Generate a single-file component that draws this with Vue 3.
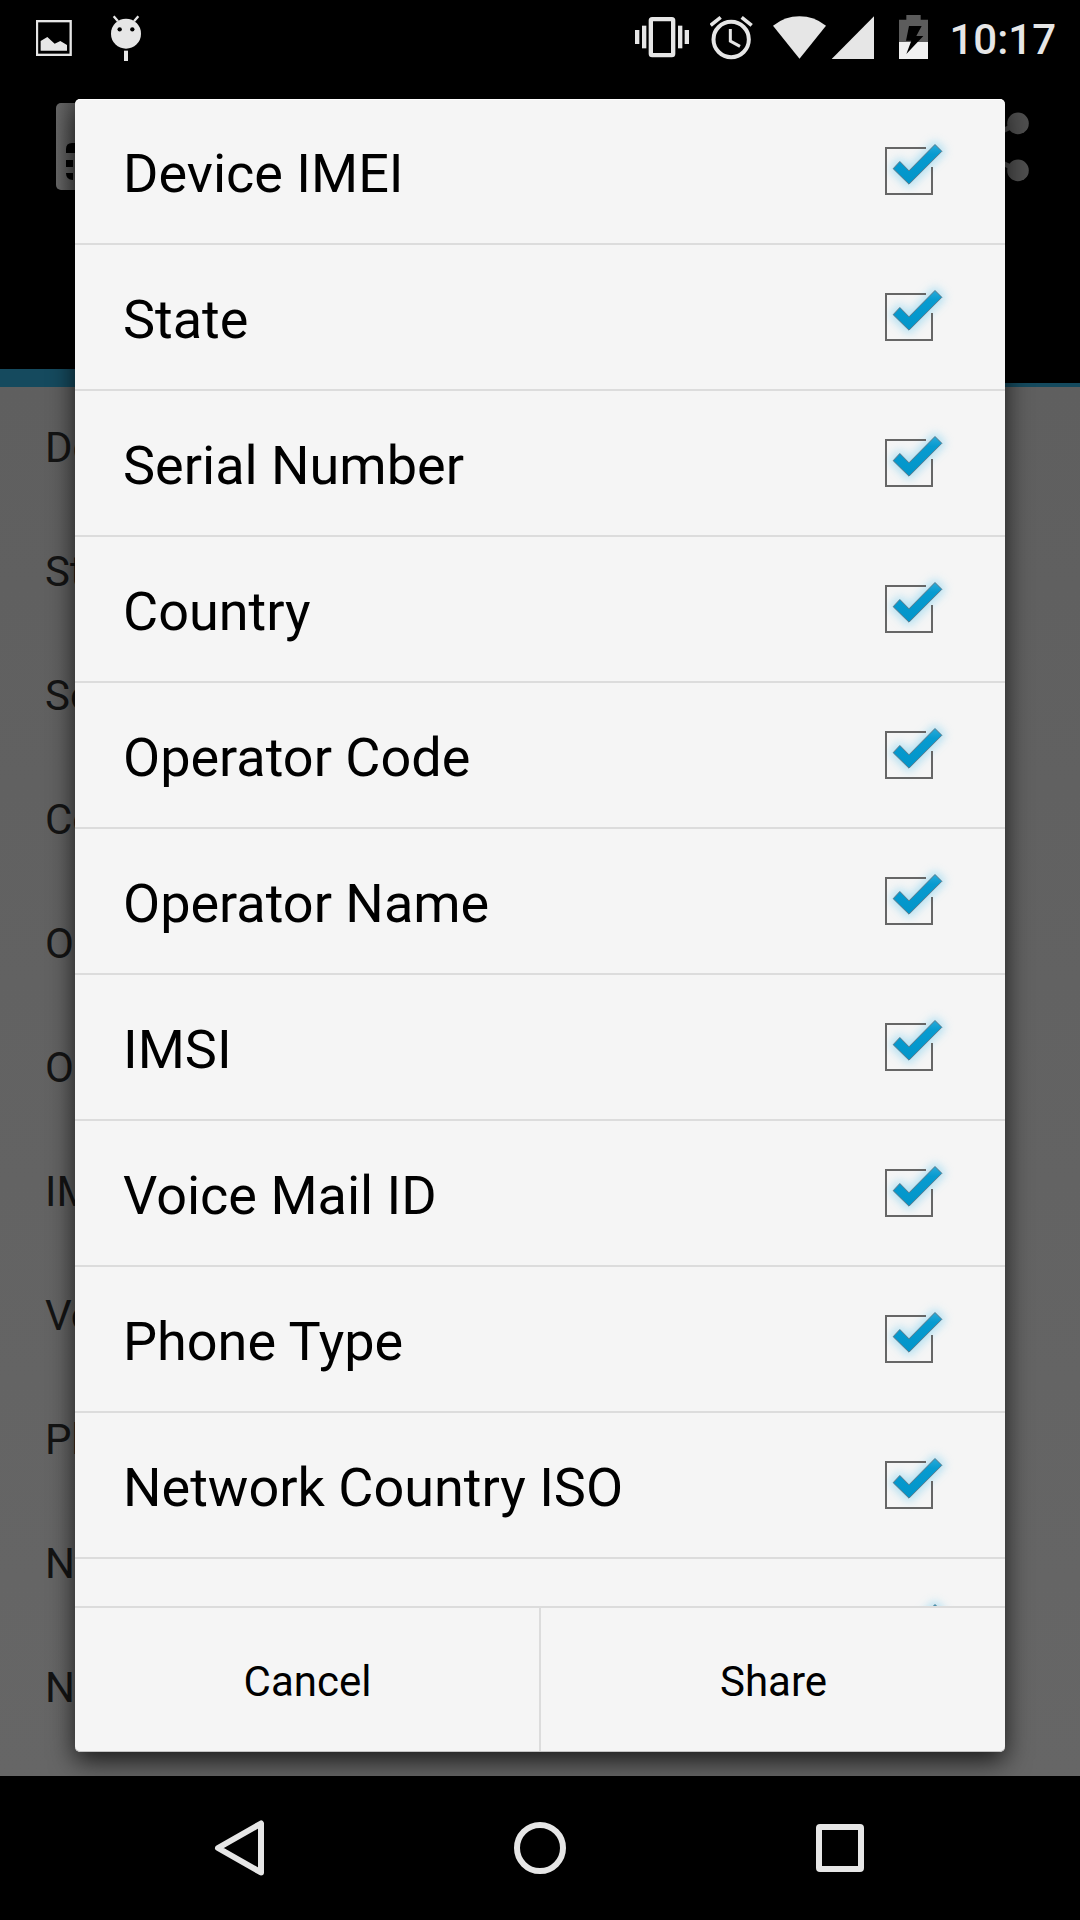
<script setup>
const fields = [
  { label: 'Device IMEI', short: 'De' },
  { label: 'State', short: 'St' },
  { label: 'Serial Number', short: 'Se' },
  { label: 'Country', short: 'Co' },
  { label: 'Operator Code', short: 'O' },
  { label: 'Operator Name', short: 'O' },
  { label: 'IMSI', short: 'IM' },
  { label: 'Voice Mail ID', short: 'Vo' },
  { label: 'Phone Type', short: 'Ph' },
  { label: 'Network Country ISO', short: 'N' },
  { label: '', short: 'N' },
]
</script>

<template>
  <div class="screen">
    <header class="status">
      <svg class="picture" viewBox="108 0 108 225">
        <rect x="111" y="63.500" width="101" height="101" fill="none" stroke="#e6e6e6" stroke-width="7" />
        <path d="M122 152V123L142 111L164 131L181 123L201 135V152Z" fill="#e6e6e6" />
      </svg>
      <svg class="droid" viewBox="333 0 90 225">
        <path d="M341 49L354 64M415 49L402 64" stroke="#e6e6e6" stroke-width="7" />
        <circle cx="378" cy="101" r="45" fill="#e6e6e6" />
        <circle cx="359" cy="88" r="6.500" fill="#000" />
        <circle cx="397" cy="88" r="6.500" fill="#000" />
        <rect x="372" y="152" width="12" height="31" fill="#e6e6e6" />
      </svg>
      <div class="spacer"></div>
      <svg class="vibrate" viewBox="45 0 162 225" fill="#e6e6e6">
        <rect x="92.500" y="57.500" width="67" height="108" rx="4" fill="none" stroke="#e6e6e6" stroke-width="13" />
        <rect x="45" y="90" width="13" height="42" />
        <rect x="66" y="77" width="13" height="68" />
        <rect x="174" y="77" width="13" height="68" />
        <rect x="194" y="90" width="13" height="42" />
      </svg>
      <svg class="alarm" viewBox="270 0 129 225" fill="none" stroke="#e6e6e6">
        <circle cx="333.500" cy="118.500" r="53" stroke-width="12" />
        <path d="M272 76L302 52M395 76L365 52" stroke-width="11" />
        <path d="M331 87V123L360 139" stroke-width="9" />
      </svg>
      <svg class="wifi" viewBox="459 0 159 225">
        <path d="M538.500 176L459 77Q495 49 538.500 49T618 77Z" fill="#e6e6e6" />
      </svg>
      <svg class="signal" viewBox="633 0 129 225">
        <path d="M762 49V177H635Z" fill="#e6e6e6" />
      </svg>
      <svg class="battery" viewBox="837 0 87 225">
        <path d="M837 126V59H859V45H902V59H924V126Z" fill="#5c5c5c" />
        <rect x="837" y="126" width="87" height="51" fill="#f0f0f0" />
        <path d="M867 78H905L889 108H910L859 162L874 122H858Z" fill="#000" />
      </svg>
      <span class="clock">10:17</span>
    </header>

    <div class="appbar">
      <svg class="sim" viewBox="0 0 87 87">
        <defs>
          <linearGradient id="simShade" x1="0" x2="1">
            <stop offset="0" stop-color="#676767" />
            <stop offset="0.3" stop-color="#545454" />
          </linearGradient>
        </defs>
        <rect width="70" height="87" rx="5" fill="url(#simShade)" />
        <path d="M10 50V46Q10 40 16 40H30V50ZM10 57H17V64H10ZM10 70H17V77Q10 77 10 70Z" fill="#000" />
      </svg>
      <svg class="share" viewBox="0 0 72 72">
        <path d="M61 12.400L12 36L61 59.400" fill="none" stroke="#4c4c4c" stroke-width="5" />
        <g fill="#4f4f4f">
          <circle cx="61" cy="12.400" r="10.800" />
          <circle cx="12" cy="36" r="10.800" />
          <circle cx="61" cy="59.400" r="10.800" />
        </g>
      </svg>
    </div>
    <div class="tabs"><div class="indicator"></div><div class="underline"></div></div>

    <ul class="behind">
      <li v-for="(f, i) in fields" :key="i">{{ f.short }}</li>
    </ul>

    <nav class="nav">
      <svg viewBox="0 0 60 60"><path d="M8 30L51 5.500V54.500Z" /></svg>
      <svg viewBox="0 0 60 60"><circle cx="30" cy="30" r="23" /></svg>
      <svg viewBox="0 0 60 60"><rect x="9" y="9" width="42" height="42" rx="1" /></svg>
    </nav>

    <section class="dialog">
      <ul class="list">
        <li v-for="(f, i) in fields" :key="i" class="row">
          <span class="label">{{ f.label }}</span>
          <svg class="check" viewBox="3 9 288 288">
            <defs>
              <linearGradient :id="'tick' + i" x1="0" y1="0" x2="0" y2="1">
                <stop offset="0" stop-color="#2aa9d8" />
                <stop offset="0.25" stop-color="#079bd0" />
                <stop offset="1" stop-color="#0295c9" />
              </linearGradient>
            </defs>
            <path class="glow" d="M98 146L119 123L147 151L225 72L247 94L147 194Z" />
            <path d="M198 84H78V222H216V141" fill="none" stroke="#666" stroke-width="6" />
            <path
              d="M99.500 146L119.500 124.500L147 152.500L225 73.500L245.500 94L147 192.500Z"
              :fill="`url(#tick${i})`"
              stroke="#58788a"
              stroke-width="3"
            />
          </svg>
        </li>
      </ul>
      <div class="buttons">
        <button>Cancel</button>
        <button>Share</button>
      </div>
    </section>
  </div>
</template>

<style>
body {
  background: #000;
}
</style>

<style scoped>
.screen {
  position: relative;
  display: flex;
  flex-direction: column;
  width: 1080px;
  height: 1920px;
  overflow: hidden;
  background: #000;
  font-family: Roboto, "Noto Sans", sans-serif;
}
ul {
  margin: 0;
  padding: 0;
  list-style: none;
}
svg {
  display: block;
  flex: none;
}
.status {
  display: flex;
  height: 75px;
  padding: 0 24px 0 36px;
}
.status svg {
  height: 75px;
}
.picture { width: 36px; }
.droid { width: 30px; margin-left: 39px; overflow: visible; }
.spacer { flex: 1; }
.vibrate { width: 54px; }
.alarm { width: 43px; margin-left: 21px; }
.wifi { width: 53px; margin-left: 20px; }
.signal { width: 43px; margin-left: 5px; }
.battery { width: 29px; margin-left: 25px; }
.clock {
  width: 128px;
  text-align: right;
  font-size: 42px;
  font-weight: 500;
  line-height: 79px;
  color: #e6e6e6;
}
.appbar {
  display: flex;
  justify-content: space-between;
  height: 294px;
  padding: 28px 51px 0 56px;
  box-sizing: border-box;
}
.sim {
  width: 87px;
  height: 87px;
}
.share {
  width: 72px;
  height: 72px;
  margin-top: 8px;
}
.tabs {
  display: flex;
  align-items: flex-end;
  height: 18px;
}
.indicator {
  width: 360px;
  height: 18px;
  background: #154a5e;
}
.underline {
  flex: 1;
  height: 4px;
  background: #154a5e;
}
.behind {
  height: 1389px;
  overflow: hidden;
  background: linear-gradient(#5f5f5f, #666);
}
.behind li {
  height: 124px;
  padding-left: 45px;
  font-size: 42px;
  line-height: 121px;
  color: #141414;
}
.nav {
  position: relative;
  z-index: 3;
  display: flex;
  justify-content: center;
  align-items: center;
  gap: 240px;
  height: 144px;
  background: #000;
}
.nav svg {
  width: 60px;
  height: 60px;
  fill: none;
  stroke: #e6e6e6;
  stroke-width: 6;
  stroke-linejoin: round;
}
.dialog {
  position: absolute;
  left: 75px;
  top: 99px;
  z-index: 2;
  width: 930px;
  height: 1653px;
  display: flex;
  flex-direction: column;
  overflow: hidden;
  border-radius: 5px;
  background: #f5f5f5;
  box-shadow: 0 9px 26px rgba(0, 0, 0, 0.75);
}
.dialog::after {
  content: "";
  position: absolute;
  inset: 0;
  border-radius: 5px;
  box-shadow: inset 0 1px #fff, inset 0 -1px #c4c4c4;
}
.list {
  height: 1507px;
  overflow: hidden;
}
.row {
  display: flex;
  justify-content: space-between;
  align-items: center;
  height: 144px;
  padding: 0 48px;
  border-bottom: 2px solid #dcdcdc;
}
.label {
  padding-top: 6px;
  font-size: 54px;
  line-height: 64px;
  color: #000;
}
.check {
  width: 96px;
  height: 96px;
  overflow: visible;
}
.glow {
  fill: #84d2f0;
  stroke: #84d2f0;
  stroke-width: 16;
  filter: blur(14px);
  opacity: 0.62;
}
.buttons {
  display: flex;
  height: 144px;
  border-top: 2px solid #dcdcdc;
}
.buttons button {
  flex: 1;
  padding: 2px 0 0;
  border: 0;
  background: none;
  font: 42px Roboto, "Noto Sans", sans-serif;
  text-indent: 1px;
  color: #000;
}
.buttons button + button {
  border-left: 2px solid #dcdcdc;
}
</style>
